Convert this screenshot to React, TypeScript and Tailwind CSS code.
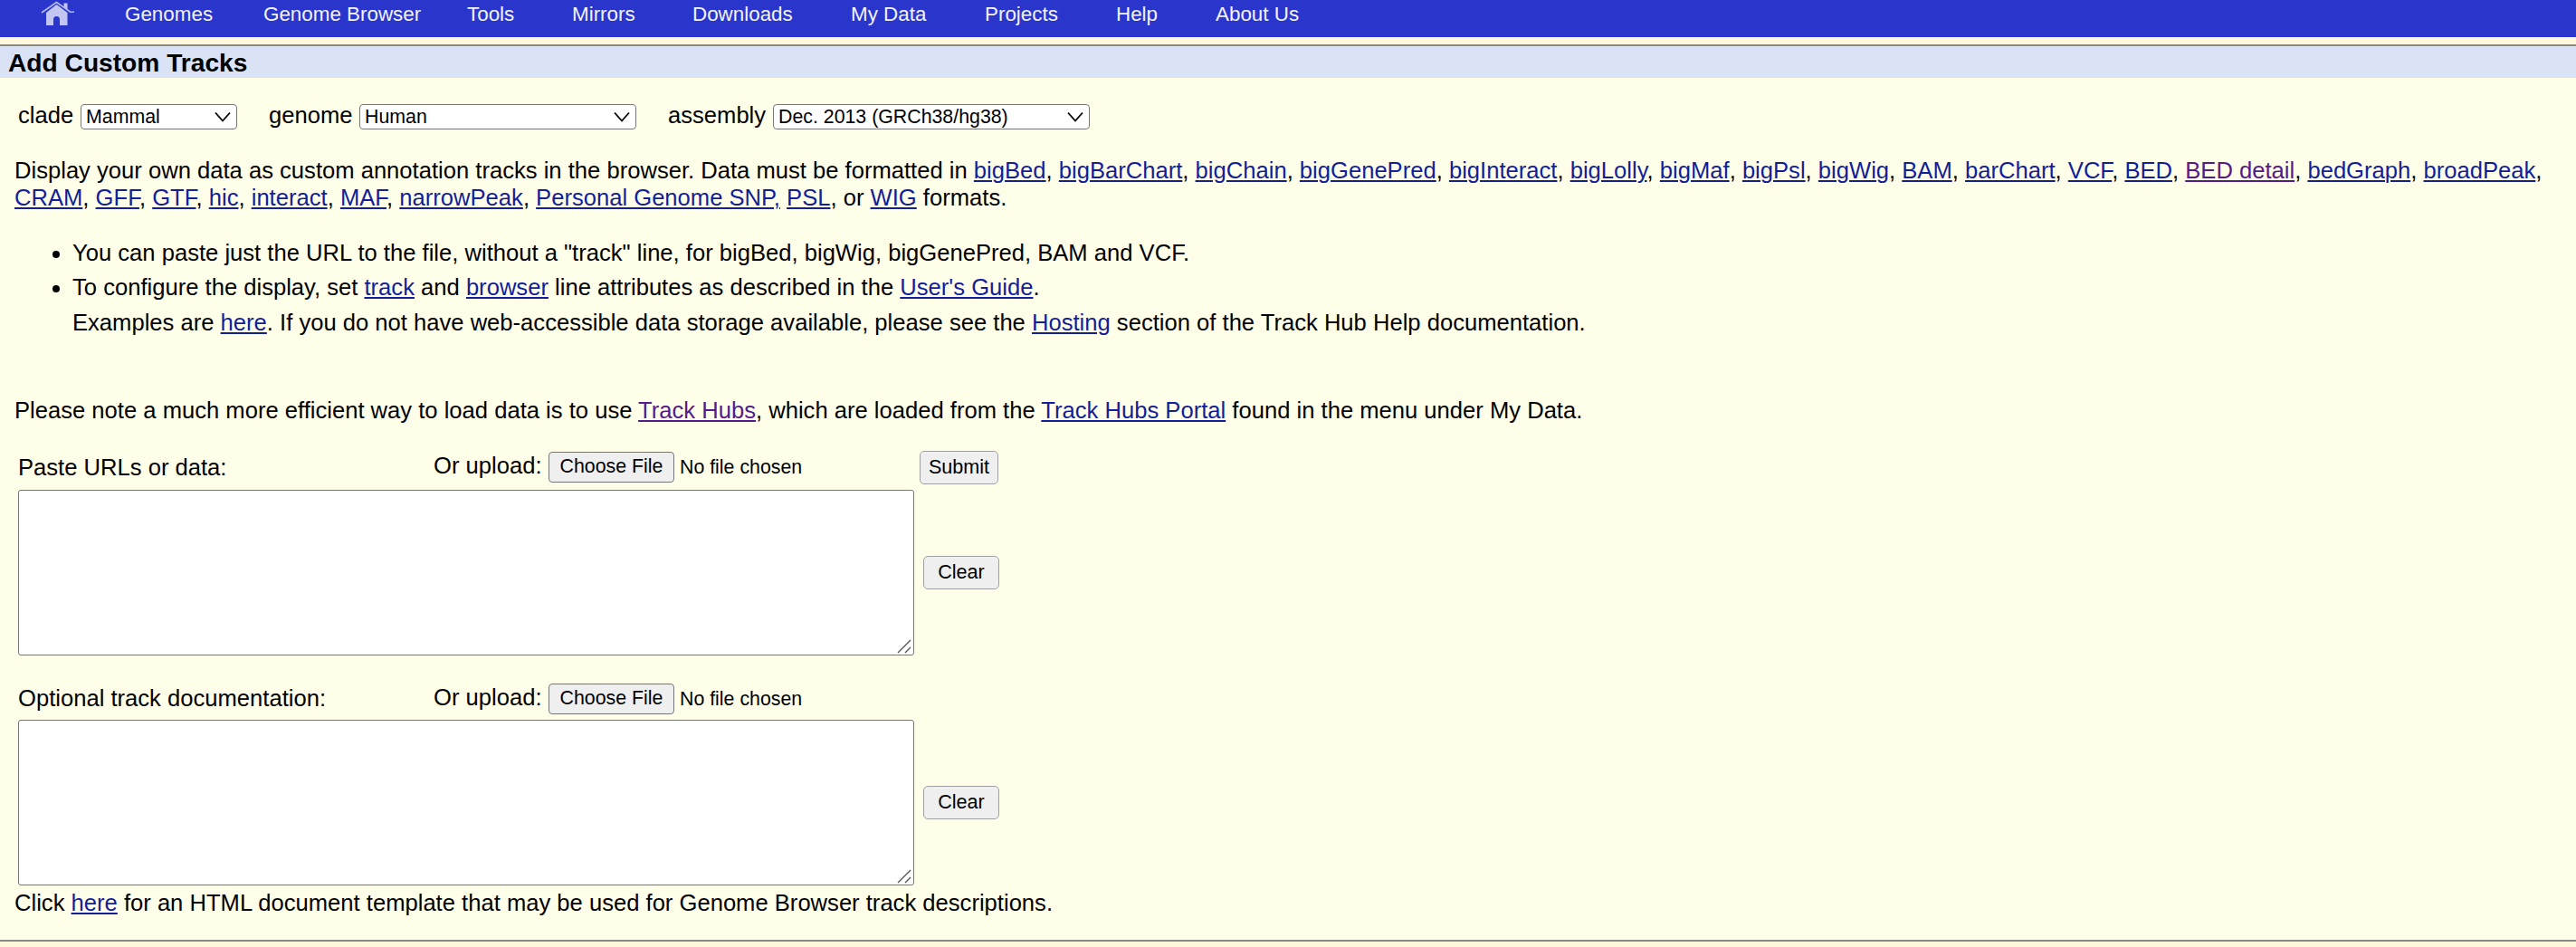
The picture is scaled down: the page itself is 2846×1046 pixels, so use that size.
import React from "react";

const nav = [
  { label: "Genomes", w: "w-[153px]" },
  { label: "Genome Browser", w: "w-[225px]" },
  { label: "Tools", w: "w-[116px]" },
  { label: "Mirrors", w: "w-[133px]" },
  { label: "Downloads", w: "w-[175px]" },
  { label: "My Data", w: "w-[148px]" },
  { label: "Projects", w: "w-[145px]" },
  { label: "Help", w: "w-[110px]" },
  { label: "About Us", w: "w-[120px]" },
];

function A({ children, visited = false }: { children: React.ReactNode; visited?: boolean }) {
  return (
    <a
      href="#"
      className={
        "underline decoration-2 underline-offset-[2px] " +
        (visited ? "text-[#551a8b]" : "text-[#121e9a]")
      }
    >
      {children}
    </a>
  );
}

function LinkList({ items }: { items: string[] }) {
  return (
    <>
      {items.map((t) => (
        <React.Fragment key={t}>
          <A visited={t === "BED detail"}>{t}</A>
          {", "}
        </React.Fragment>
      ))}
    </>
  );
}

function Select({ value, className }: { value: string; className: string }) {
  return (
    <div
      className={
        "flex h-7 items-center justify-between rounded-[4px] border border-[#767676] bg-white pr-[6px] pl-[5px] text-[21.33px] leading-[26px] " +
        className
      }
    >
      <span>{value}</span>
      <svg width="18" height="12" viewBox="0 0 18 12" fill="none" stroke="#000" strokeWidth="1.8">
        <path d="M1 1.500 9 10.500 17 1.500" />
      </svg>
    </div>
  );
}

function Upload({ className }: { className: string }) {
  return (
    <div className={"flex items-start " + className}>
      <span className="w-[127px] leading-[30px]">Or upload:</span>
      <button className="h-[34px] w-[139px] rounded-[4px] border border-[#767676] bg-[#efefef] pb-[2px] text-[21.33px] leading-[30px]">
        Choose File
      </button>
      <span className="ml-[6px] text-[21.33px] leading-[34px]">No file chosen</span>
    </div>
  );
}

function TextArea() {
  return (
    <div className="flex h-[183px] w-[990px] items-end justify-end rounded-[3px] border border-[#767676] bg-white pr-[2px] pb-[1px]">
      <svg width="16" height="16" viewBox="0 0 16 16" fill="none" stroke="#555" strokeWidth="1.4">
        <path d="M1 15 15 1M9 15l6-6" />
      </svg>
    </div>
  );
}

function Button({ children, className }: { children: string; className: string }) {
  return (
    <button
      className={
        "h-[37px] rounded-[5px] border border-[#a0a0a4] bg-[#efefef] pb-[2px] text-[21.6px] leading-[32px] " +
        className
      }
    >
      {children}
    </button>
  );
}

export default function App() {
  return (
    <div className="h-[1046px] w-[2846px] overflow-hidden bg-[#fff8dc] font-['Liberation_Sans',Arial,sans-serif] text-[25.6px] whitespace-nowrap text-black">
      <nav className="flex h-[41px] bg-[#2a36cb] text-[22.4px] leading-8 text-[#f2f2fb]">
        <div className="w-[138px] pl-[45px]">
          <svg width="38" height="28" viewBox="0 0 38 28">
            <path d="M25.500 3.500h4v8l-4-3.500z" fill="#c3c6f0" />
            <path d="M6 14 17.500 5 29.500 14V28H21V21.500q0-3.500-3.500-3.500T14 21.500V28H6z" fill="#c3c6f0" />
            <path d="M1 14 17.500 2.500 33 13.500l4-.5" fill="none" stroke="#b4b8ee" strokeWidth="1.6" />
          </svg>
        </div>
        {nav.map((n) => (
          <a key={n.label} href="#" className={n.w}>
            {n.label}
          </a>
        ))}
      </nav>
      <main className="mt-2 h-[991px] border-y-2 border-[#888888] bg-[#fffee8]">
        <h1 className="h-[35px] bg-[#dae3f6] pl-[9px] text-[28.16px] leading-[38px] font-bold">
          Add Custom Tracks
        </h1>
        <div className="mt-[29px] flex h-7 items-start pl-5">
          <span className="w-[69px] leading-6">clade</span>
          <Select value="Mammal" className="w-[173px]" />
          <span className="ml-[35px] w-[100px] leading-6">genome</span>
          <Select value="Human" className="w-[306px]" />
          <span className="ml-[35px] w-[116px] leading-6">assembly</span>
          <Select value="Dec. 2013 (GRCh38/hg38)" className="w-[350px]" />
        </div>
        <p className="mt-[30px] pl-4 leading-[30px]">
          Display your own data as custom annotation tracks in the browser. Data must be formatted in{" "}
          <LinkList
            items={[
              "bigBed", "bigBarChart", "bigChain", "bigGenePred", "bigInteract", "bigLolly", "bigMaf",
              "bigPsl", "bigWig", "BAM", "barChart", "VCF", "BED", "BED detail", "bedGraph", "broadPeak",
            ]}
          />
          <br />
          <LinkList items={["CRAM", "GFF", "GTF", "hic", "interact", "MAF", "narrowPeak"]} />
          <A>Personal Genome SNP,</A> <A>PSL</A>, or <A>WIG</A> formats.
        </p>
        <ul className="mt-[31px] pl-[58px] leading-[30px]">
          <li className="flex items-start">
            <span className="mt-[13px] mr-[14px] size-2 rounded-full bg-black" />
            <span>You can paste just the URL to the file, without a "track" line, for bigBed, bigWig, bigGenePred, BAM and VCF.</span>
          </li>
          <li className="mt-2 flex items-start">
            <span className="mt-[13px] mr-[14px] size-2 rounded-full bg-black" />
            <div>
              <div>
                To configure the display, set <A>track</A> and <A>browser</A> line attributes as described in
                the <A>User's Guide</A>.
              </div>
              <div className="mt-[9px]">
                Examples are <A>here</A>. If you do not have web-accessible data storage available, please see
                the <A>Hosting</A> section of the Track Hub Help documentation.
              </div>
            </div>
          </li>
        </ul>
        <p className="mt-[67px] pl-4 leading-[30px]">
          Please note a much more efficient way to load data is to use <A visited>Track Hubs</A>, which are
          loaded from the <A>Track Hubs Portal</A> found in the menu under My Data.
        </p>
        <div className="mt-[30px] ml-5 w-[1090px]">
          <div className="flex h-[43px] items-start">
            <span className="w-[459px] pt-[3px] leading-[30px]">Paste URLs or data:</span>
            <Upload className="w-[537px] pt-[1px]" />
            <Button className="w-[87px]">Submit</Button>
          </div>
          <div className="flex items-center gap-[10px]">
            <TextArea />
            <Button className="w-[84px]">Clear</Button>
          </div>
          <div className="mt-[31px] flex h-[40px] items-start">
            <span className="w-[459px] pt-[1px] leading-[30px]">Optional track documentation:</span>
            <Upload className="w-[537px]" />
          </div>
          <div className="flex items-center gap-[10px]">
            <TextArea />
            <Button className="w-[84px]">Clear</Button>
          </div>
        </div>
        <p className="mt-1 pl-4 leading-[30px]">
          Click <A>here</A> for an HTML document template that may be used for Genome Browser track
          descriptions.
        </p>
      </main>
    </div>
  );
}
